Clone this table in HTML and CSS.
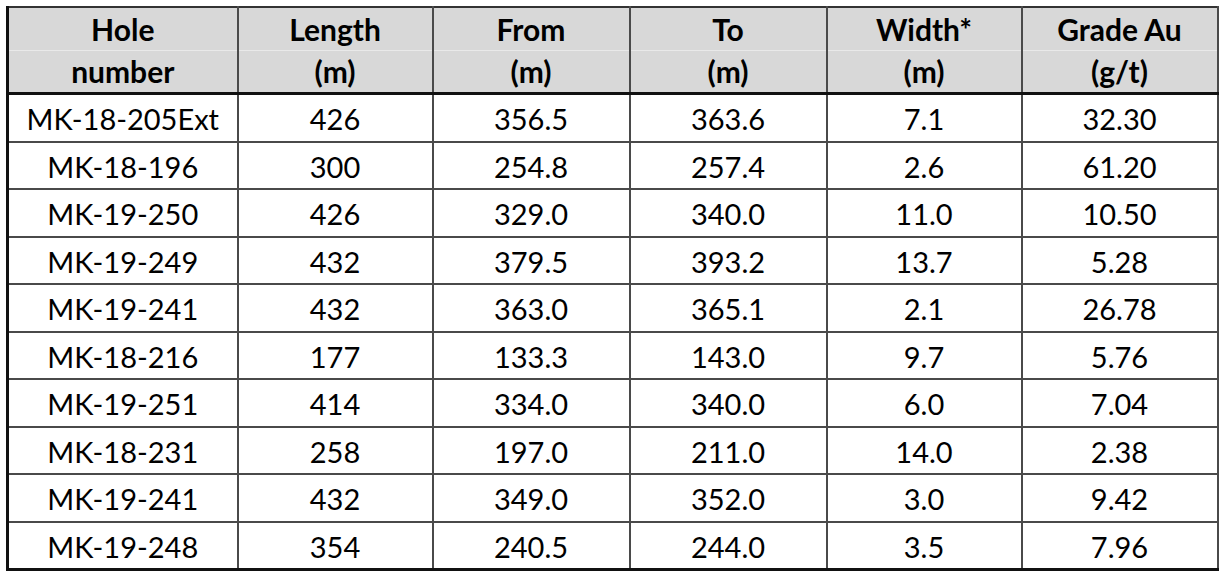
FILE: index.html
```html
<!DOCTYPE html>
<html lang="en">
<head>
<meta charset="utf-8">
<title>Drill results</title>
<link rel="stylesheet" href="styles.css">
</head>
<body>
<table class="results">
  <colgroup>
    <col class="c-hole">
    <col class="c-len">
    <col class="c-from">
    <col class="c-to">
    <col class="c-width">
    <col class="c-grade">
  </colgroup>
  <thead>
    <tr class="h1">
      <th>Hole</th><th>Length</th><th>From</th><th>To</th><th>Width*</th><th>Grade Au</th>
    </tr>
    <tr class="h2">
      <th>number</th><th>(m)</th><th>(m)</th><th>(m)</th><th>(m)</th><th>(g/t)</th>
    </tr>
  </thead>
  <tbody>
    <tr><td>MK-18-205Ext</td><td>426</td><td>356.5</td><td>363.6</td><td>7.1</td><td>32.30</td></tr>
    <tr><td>MK-18-196</td><td>300</td><td>254.8</td><td>257.4</td><td>2.6</td><td>61.20</td></tr>
    <tr><td>MK-19-250</td><td>426</td><td>329.0</td><td>340.0</td><td>11.0</td><td>10.50</td></tr>
    <tr><td>MK-19-249</td><td>432</td><td>379.5</td><td>393.2</td><td>13.7</td><td>5.28</td></tr>
    <tr><td>MK-19-241</td><td>432</td><td>363.0</td><td>365.1</td><td>2.1</td><td>26.78</td></tr>
    <tr><td>MK-18-216</td><td>177</td><td>133.3</td><td>143.0</td><td>9.7</td><td>5.76</td></tr>
    <tr><td>MK-19-251</td><td>414</td><td>334.0</td><td>340.0</td><td>6.0</td><td>7.04</td></tr>
    <tr><td>MK-18-231</td><td>258</td><td>197.0</td><td>211.0</td><td>14.0</td><td>2.38</td></tr>
    <tr><td>MK-19-241</td><td>432</td><td>349.0</td><td>352.0</td><td>3.0</td><td>9.42</td></tr>
    <tr><td>MK-19-248</td><td>354</td><td>240.5</td><td>244.0</td><td>3.5</td><td>7.96</td></tr>
  </tbody>
</table>
</body>
</html>
```

FILE: styles.css
```css
html, body {
  margin: 0;
  padding: 0;
  background: #ffffff;
}

body {
  padding: 6px 0 0 6px;
  font-family: "Lato", "Liberation Sans", sans-serif;
  color: #000;
}

.results {
  border-collapse: collapse;
  table-layout: fixed;
  width: 1212px;
  border-left: 3px solid #111;
  border-top: 2px solid #333;
  border-right: 2px solid #222;
  border-bottom: 3px solid #111;
}

.c-hole { width: 230px; }
.c-len { width: 195px; }
.c-from { width: 197px; }
.c-to { width: 197px; }
.c-width { width: 195px; }
.c-grade { width: 196px; }

.results th,
.results td {
  text-align: center;
  vertical-align: middle;
  padding: 0;
  border-left: 2px solid #4a4a4a;
  border-right: 2px solid #4a4a4a;
}

.results th {
  background: #d8d8d8;
  font-weight: 700;
  font-size: 30px;
  height: 41px;
  line-height: 41px;
}

.results .h1 th {
  border-bottom: 1px solid #e9e9e9;
  padding-top: 1px;
}

.results .h2 th {
  border-bottom: 3px solid #111;
}

.results td {
  font-size: 29px;
  font-weight: 400;
  line-height: 34px;
  height: 42.5px;
  padding-top: 3px;
  border-bottom: 2px solid #4a4a4a;
}

.results tbody tr:last-child td {
  border-bottom: 3px solid #111;
}
```
